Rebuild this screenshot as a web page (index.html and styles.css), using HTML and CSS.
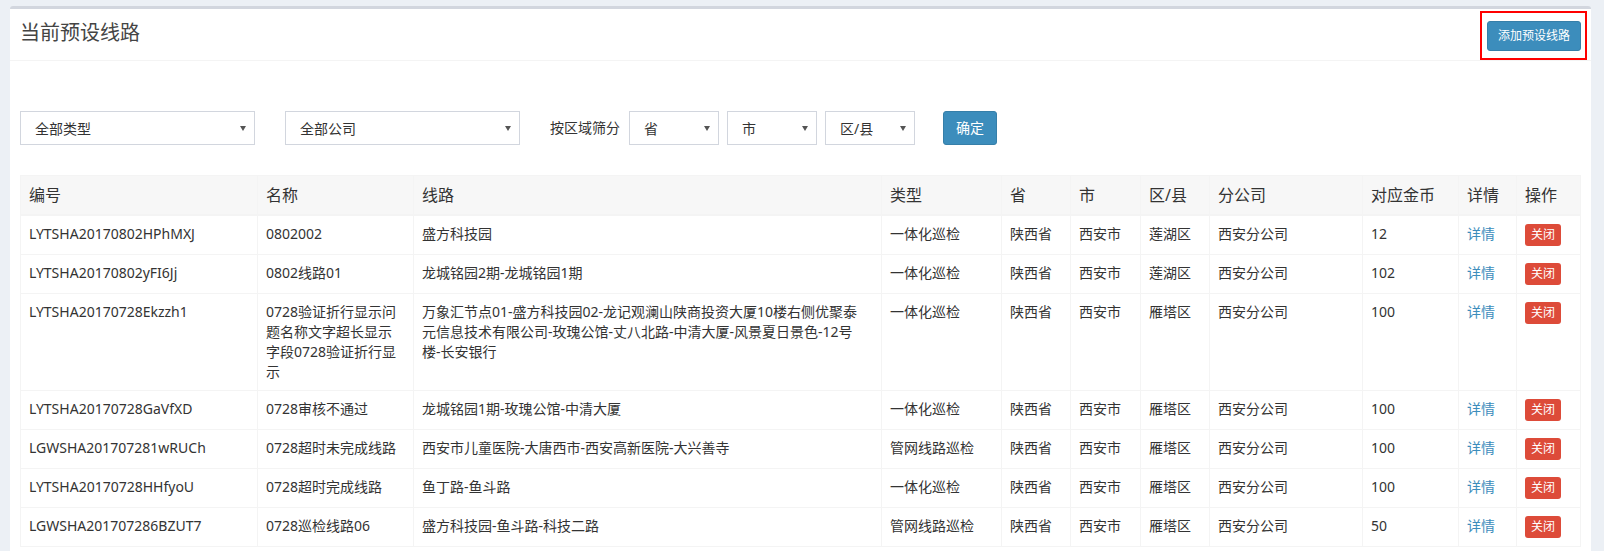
FILE: index.html
```html
<!DOCTYPE html>
<html lang="zh-CN">
<head>
    <meta charset="utf-8">
    <title>当前预设线路</title>
    <link rel="stylesheet" href="styles.css">
</head>
<body>
    <div class="box">
        <div class="box-header">
            <h3 class="box-title">当前预设线路</h3>
            <span class="mark">
                <button class="btn btn-primary btn-sm">添加预设线路</button>
            </span>
        </div>
        <div class="box-body">
            <div class="filters">
                <div class="select wide"><select><option>全部类型</option></select></div>
                <div class="select wide"><select><option>全部公司</option></select></div>
                <span class="filter-label">按区域筛分</span>
                <div class="select small"><select><option>省</option></select></div>
                <div class="select small"><select><option>市</option></select></div>
                <div class="select small"><select><option>区/县</option></select></div>
                <button class="btn btn-primary btn-ok">确定</button>
            </div>

            <table class="route-table">
                <colgroup>
                    <col style="width:237px"><col style="width:156px"><col style="width:468px">
                    <col style="width:120px"><col style="width:69px"><col style="width:70px">
                    <col style="width:69px"><col style="width:153px"><col style="width:96px">
                    <col style="width:58px"><col style="width:64px">
                </colgroup>
                <thead>
                    <tr>
                        <th>编号</th><th>名称</th><th>线路</th><th>类型</th><th>省</th><th>市</th>
                        <th>区/县</th><th>分公司</th><th>对应金币</th><th>详情</th><th>操作</th>
                    </tr>
                </thead>
                <tbody>
                    <tr>
                        <td>LYTSHA20170802HPhMXJ</td><td>0802002</td><td>盛方科技园</td><td>一体化巡检</td>
                        <td>陕西省</td><td>西安市</td><td>莲湖区</td><td>西安分公司</td><td>12</td>
                        <td><a href="#">详情</a></td><td><span class="label">关闭</span></td>
                    </tr>
                    <tr>
                        <td>LYTSHA20170802yFI6Jj</td><td>0802线路01</td><td>龙城铭园2期-龙城铭园1期</td><td>一体化巡检</td>
                        <td>陕西省</td><td>西安市</td><td>莲湖区</td><td>西安分公司</td><td>102</td>
                        <td><a href="#">详情</a></td><td><span class="label">关闭</span></td>
                    </tr>
                    <tr>
                        <td>LYTSHA20170728Ekzzh1</td><td>0728验证折行显示问题名称文字超长显示字段0728验证折行显示</td>
                        <td>万象汇节点01-盛方科技园02-龙记观澜山陕商投资大厦10楼右侧优聚泰<br>元信息技术有限公司-玫瑰公馆-丈八北路-中清大厦-风景夏日景色-12号<br>楼-长安银行</td>
                        <td>一体化巡检</td><td>陕西省</td><td>西安市</td><td>雁塔区</td><td>西安分公司</td><td>100</td>
                        <td><a href="#">详情</a></td><td><span class="label">关闭</span></td>
                    </tr>
                    <tr>
                        <td>LYTSHA20170728GaVfXD</td><td>0728审核不通过</td><td>龙城铭园1期-玫瑰公馆-中清大厦</td><td>一体化巡检</td>
                        <td>陕西省</td><td>西安市</td><td>雁塔区</td><td>西安分公司</td><td>100</td>
                        <td><a href="#">详情</a></td><td><span class="label">关闭</span></td>
                    </tr>
                    <tr>
                        <td>LGWSHA201707281wRUCh</td><td>0728超时未完成线路</td><td>西安市儿童医院-大唐西市-西安高新医院-大兴善寺</td><td>管网线路巡检</td>
                        <td>陕西省</td><td>西安市</td><td>雁塔区</td><td>西安分公司</td><td>100</td>
                        <td><a href="#">详情</a></td><td><span class="label">关闭</span></td>
                    </tr>
                    <tr>
                        <td>LYTSHA20170728HHfyoU</td><td>0728超时完成线路</td><td>鱼丁路-鱼斗路</td><td>一体化巡检</td>
                        <td>陕西省</td><td>西安市</td><td>雁塔区</td><td>西安分公司</td><td>100</td>
                        <td><a href="#">详情</a></td><td><span class="label">关闭</span></td>
                    </tr>
                    <tr>
                        <td>LGWSHA201707286BZUT7</td><td>0728巡检线路06</td><td>盛方科技园-鱼斗路-科技二路</td><td>管网线路巡检</td>
                        <td>陕西省</td><td>西安市</td><td>雁塔区</td><td>西安分公司</td><td>50</td>
                        <td><a href="#">详情</a></td><td><span class="label">关闭</span></td>
                    </tr>
                </tbody>
            </table>
        </div>
    </div>
</body>
</html>
```

FILE: styles.css
```css
/* General */
* {
    margin: 0;
    padding: 0;
    box-sizing: border-box;
}

body {
    background: #ecf0f5;
    color: #333;
    font-family: "Noto Sans", "Noto Sans CJK SC", sans-serif;
    font-size: 14px;
    line-height: 20px;
    padding: 6px 13px 0 10px;
    overflow: hidden;
}

/* Box */
.box {
    background: #fff;
    border-top: 3px solid #d2d6de;
    border-radius: 3px 3px 0 0;
}

.box-header {
    display: flex;
    justify-content: space-between;
    align-items: flex-start;
    padding: 12px 10px 9px;
    border-bottom: 1px solid #f4f4f4;
}

.box-title {
    font-size: 20px;
    font-weight: normal;
    line-height: 24px;
    color: #444;
}

/* red annotation frame around the add button */
.mark {
    position: relative;
    display: block;
}

.mark::after {
    content: "";
    position: absolute;
    top: -10px;
    right: -6px;
    bottom: -9px;
    left: -7px;
    border: 2px solid #f00;
}

.box-body {
    padding: 50px 10px 10px;
}

/* Buttons */
.btn {
    font-family: inherit;
    border: 1px solid #367fa9;
    border-radius: 3px;
    background: #3c8dbc;
    color: #fff;
    cursor: pointer;
}

.btn-sm {
    font-size: 12px;
    line-height: 18px;
    padding: 5px 10px;
}

.btn-ok {
    font-size: 14px;
    line-height: 20px;
    padding: 6px 12px;
    margin-left: 28px;
}

/* Filters */
.filters {
    display: flex;
    align-items: center;
    margin-bottom: 30px;
}

.select {
    position: relative;
    height: 34px;
    border: 1px solid #d2d6de;
}

.select select {
    appearance: none;
    -webkit-appearance: none;
    border: none;
    outline: none;
    background: transparent;
    width: 100%;
    height: 100%;
    padding: 0 14px;
    font-family: inherit;
    font-size: 14px;
    color: #333;
}

.select::after {
    content: "";
    position: absolute;
    right: 8px;
    top: 14px;
    border-left: 3px solid transparent;
    border-right: 3px solid transparent;
    border-top: 5px solid #555;
}

.select.wide {
    width: 235px;
}

.select.wide + .select.wide {
    margin-left: 30px;
}

.select.small {
    width: 90px;
    margin-left: 8px;
}

.filter-label {
    margin: 0 1px 0 30px;
}

/* Table */
.route-table {
    width: 1560px;
    table-layout: fixed;
    border-collapse: collapse;
    border: 1px solid #f4f4f4;
}

.route-table th,
.route-table td {
    border: 1px solid #f4f4f4;
    padding: 8px;
    text-align: left;
    vertical-align: top;
    word-break: break-all;
}

.route-table th {
    background: #f7f7f7;
    font-size: 16px;
    font-weight: normal;
    line-height: 22px;
    border-bottom-width: 2px;
}

.route-table a {
    color: #3c8dbc;
    text-decoration: none;
}

.label {
    display: inline-block;
    vertical-align: top;
    background: #dd4b39;
    color: #fff;
    font-size: 12px;
    line-height: 16px;
    padding: 3px 6px;
    border-radius: 3px;
}
```
